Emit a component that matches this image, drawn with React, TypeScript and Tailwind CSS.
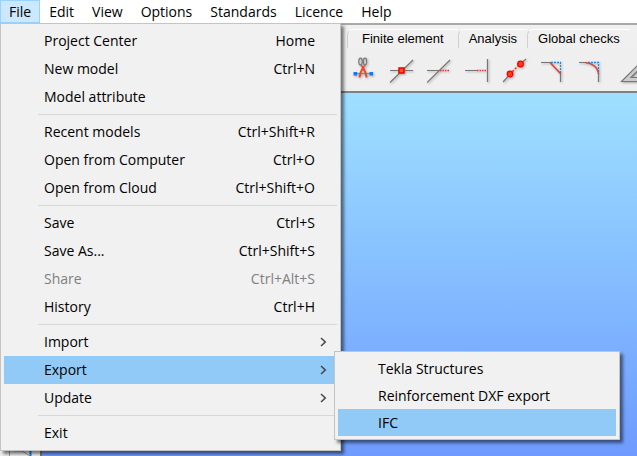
import type { ReactNode } from "react";

type Item = { label: string; keys?: string; disabled?: boolean; sub?: boolean };

const menus = ["File", "Edit", "View", "Options", "Standards", "Licence", "Help"];

const groups: Item[][] = [
  [
    { label: "Project Center", keys: "Home" },
    { label: "New model", keys: "Ctrl+N" },
    { label: "Model attribute" },
  ],
  [
    { label: "Recent models", keys: "Ctrl+Shift+R" },
    { label: "Open from Computer", keys: "Ctrl+O" },
    { label: "Open from Cloud", keys: "Ctrl+Shift+O" },
  ],
  [
    { label: "Save", keys: "Ctrl+S" },
    { label: "Save As...", keys: "Ctrl+Shift+S" },
    { label: "Share", keys: "Ctrl+Alt+S", disabled: true },
    { label: "History", keys: "Ctrl+H" },
  ],
  [
    { label: "Import", sub: true },
    { label: "Export", sub: true },
    { label: "Update", sub: true },
  ],
  [{ label: "Exit" }],
];

const exportItems = ["Tekla Structures", "Reinforcement DXF export", "IFC"];
const tabs = ["Finite element", "Analysis", "Global checks"];

const panel =
  "absolute border border-[#c4c4c4] bg-[#f1f1f1] p-[3px] shadow-[3px_3px_3px_rgba(0,0,0,0.5)]";

function Chevron() {
  return (
    <svg width="7" height="10" viewBox="0 0 7 10" fill="none" stroke="#444" strokeWidth="1.5">
      <path d="M1 1l4.3 4L1 9" />
    </svg>
  );
}

function ExportMenu() {
  return (
    <ul className={`${panel} -top-[5px] left-[330px] z-10 w-[286px]`}>
      {exportItems.map((label) => (
        <li key={label}>
          <button
            className={`flex h-[27px] w-full items-center pl-10 text-left ${
              label === "IFC" ? "bg-[#91c9f7]" : ""
            }`}
          >
            {label}
          </button>
        </li>
      ))}
    </ul>
  );
}

function FileMenu() {
  return (
    <div className={`${panel} left-0 top-full z-10 w-[341px]`}>
      {groups.map((group, i) => (
        <ul
          key={i}
          className={
            i > 0
              ? "before:ml-[34px] before:block before:h-[7px] before:bg-[linear-gradient(#d7d7d7,#d7d7d7)] before:bg-[length:100%_1px] before:bg-center before:bg-no-repeat"
              : ""
          }
        >
          {group.map((item) => (
            <li key={item.label} className="relative">
              <button
                disabled={item.disabled}
                className={`flex h-7 w-full items-center justify-between pl-10 text-left disabled:text-[#808080] ${
                  item.sub ? "pr-[10px]" : "pr-[22px]"
                } ${item.label === "Export" ? "bg-[#91c9f7]" : ""}`}
              >
                <span>{item.label}</span>
                {item.keys && <span>{item.keys}</span>}
                {item.sub && <Chevron />}
              </button>
              {item.label === "Export" && <ExportMenu />}
            </li>
          ))}
        </ul>
      ))}
    </div>
  );
}

function Tool({ label, children }: { label: string; children: ReactNode }) {
  return (
    <button aria-label={label} className="shrink-0 drop-shadow-[1px_1px_1px_rgba(0,0,0,0.3)]">
      <svg width="26" height="28" viewBox="0 0 26 28" fill="none" stroke="#777" strokeWidth="1.2">
        {children}
      </svg>
    </button>
  );
}

function Toolbar() {
  return (
    <div className="flex h-[45px] items-start gap-3 overflow-hidden border-b-2 border-[#7c8388] bg-[#efefef] pl-[351px] pt-2">
      <Tool label="Cut member">
        <ellipse cx="9.5" cy="5.5" rx="1.7" ry="3.3" />
        <ellipse cx="14" cy="5.5" rx="1.7" ry="3.3" />
        <path d="M4 17.5H22" stroke="#6c8fb8" />
        <path d="M13.5 10.5L14 8.5M10.5 10.5L10 8.5" />
        <path d="M8.5 21.5C9 16 11 13 13 10M15.5 21.5C15 16 13 13 11 10" stroke="#f0481c" strokeWidth="1.8" />
        <path d="M2.500 16h3.500v3.500h-3.500zM18.500 16h3.500v3.500h-3.500z" fill="#0a7bff" stroke="none" />
      </Tool>
      <Tool label="Split at point">
        <path d="M1 14.5H24M1 26.500L24 4" />
        <rect x="10" y="12" width="5" height="5" fill="#ff5a14" stroke="#f40000" strokeWidth="1.500" />
      </Tool>
      <Tool label="Trim to line">
        <path d="M0 14.500H13M0 26.500L23 4" />
        <path d="M13 14.500H23" stroke="#e33" strokeWidth="1.600" strokeDasharray="1.500 1" />
      </Tool>
      <Tool label="Extend to line">
        <path d="M0 14.500H12M22.500 3V26" />
        <path d="M12 14.500H22" stroke="#e33" strokeWidth="1.600" strokeDasharray="1.500 1" />
      </Tool>
      <Tool label="Join">
        <path d="M0 26L5 20.500M18 7.500L23 3" />
        <path d="M7 18L17 8" stroke="#e33" strokeWidth="1.500" strokeDasharray="2 1.500" />
        <circle cx="7" cy="18" r="2.800" fill="#ff3c14" stroke="#f40000" />
        <circle cx="17.500" cy="8" r="2.800" fill="#ff3c14" stroke="#f40000" />
      </Tool>
      <Tool label="Chamfer">
        <path d="M0 6.500H10M19.500 17V26" />
        <path d="M10 6.500H19.500V17" stroke="#1689f5" strokeDasharray="2 1" strokeWidth="1.300" />
        <path d="M9 6.500L19.500 17.500" stroke="#e53935" strokeWidth="1.500" />
      </Tool>
      <Tool label="Fillet">
        <path d="M0 6.500H7M19.500 17V26" />
        <path d="M9 6.500H19.500V17" stroke="#1689f5" strokeDasharray="2 1" strokeWidth="1.300" />
        <path d="M6 6.500C13 7 19 11 19.500 18" stroke="#d9483f" strokeWidth="1.500" />
      </Tool>
      <Tool label="Measure angle">
        <path d="M4.500 25.500L26 4V25.500ZM14 21.500L22 13.500V21.500Z" fill="#ccc" fillRule="evenodd" />
      </Tool>
    </div>
  );
}

export default function App() {
  return (
    <div className="flex min-h-screen flex-col overflow-hidden bg-[#efefef] text-black">
      <nav className="relative z-10 flex h-[23px] shrink-0 bg-white font-['Open_Sans','Noto_Sans',sans-serif] text-sm">
        {menus.map((name) => (
          <button
            key={name}
            className={`flex items-center border px-2 ${
              name === "File" ? "border-[#99d1ff] bg-[#cce8ff]" : "border-transparent"
            }`}
          >
            {name}
          </button>
        ))}
        <FileMenu />
      </nav>

      <div className="flex h-[25px] items-end border-t-2 border-[#a9a9a9] bg-[#f0f0f0] pl-[347px] font-['Liberation_Sans',Arial,sans-serif] text-[13px]">
        {tabs.map((name, i) => (
          <button
            key={name}
            className={`h-[19px] whitespace-nowrap rounded-tl-md border-l border-t border-l-[#d0d0d0] border-t-white leading-[18px] ${
              i === 0 ? "px-[14px]" : "px-[10px]"
            }`}
          >
            {name}
          </button>
        ))}
      </div>

      <Toolbar />

      <main className="flex grow">
        <div className="flex w-[42px] flex-col items-center justify-end border-r-2 border-[#777] bg-[#efefef]">
          <svg width="23" height="22" viewBox="0 0 23 22" fill="none" stroke="#999">
            <path d="M0.500 0V22M5 17H13L21 22" />
            <path d="M21.500 0V22" stroke="#1684f5" strokeWidth="2" />
          </svg>
        </div>
        <div className="grow bg-linear-to-b from-[#9fe0ff] to-[#6f9aff]" />
      </main>
    </div>
  );
}
